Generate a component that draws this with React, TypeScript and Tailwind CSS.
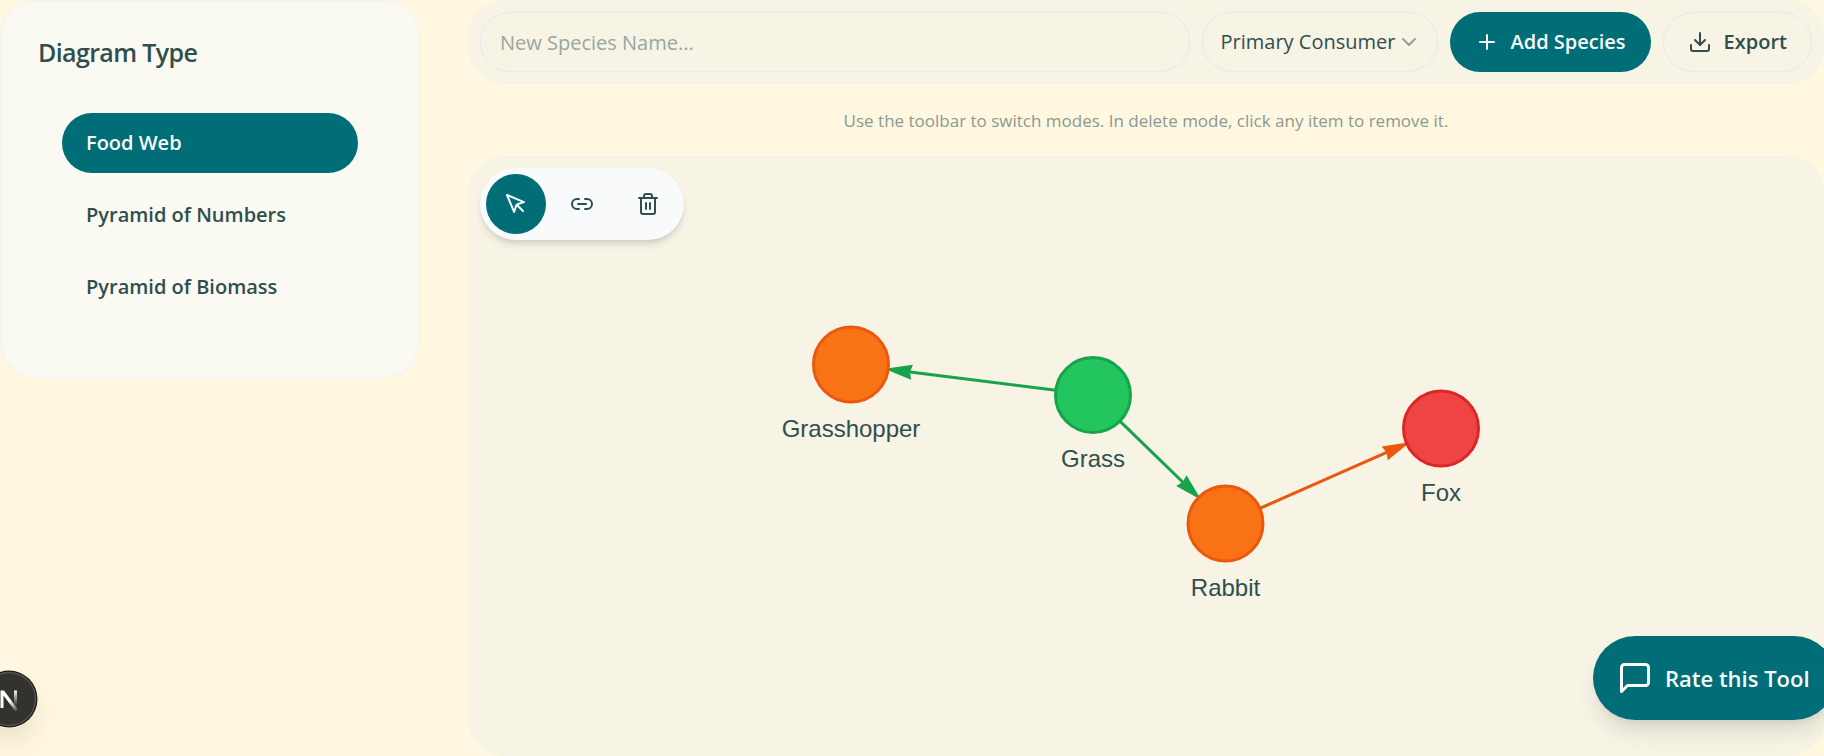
import { ChevronDown, Download, Link2, Plus } from "lucide-react";
import type { ReactNode } from "react";

const diagramTypes = ["Food Web", "Pyramid of Numbers", "Pyramid of Biomass"];

type Species = { name: string; x: number; y: number; fill: string; stroke: string };

const grasshopper: Species = { name: "Grasshopper", x: 383, y: 208.5, fill: "#f97316", stroke: "#ea580c" };
const grass: Species = { name: "Grass", x: 625, y: 239, fill: "#22c55e", stroke: "#16a34a" };
const rabbit: Species = { name: "Rabbit", x: 757.5, y: 367.5, fill: "#f97316", stroke: "#ea580c" };
const fox: Species = { name: "Fox", x: 973, y: 272.5, fill: "#ef4444", stroke: "#dc2626" };

const species = [grasshopper, grass, rabbit, fox];
const links: [Species, Species][] = [
  [grass, grasshopper],
  [grass, rabbit],
  [rabbit, fox],
];

const RADIUS = 37.5;

function Arrow({ from, to }: { from: Species; to: Species }) {
  const dx = to.x - from.x;
  const dy = to.y - from.y;
  const length = Math.hypot(dx, dy);
  const angle = (Math.atan2(dy, dx) * 180) / Math.PI;
  const tip = length - RADIUS;
  return (
    <g transform={`translate(${from.x} ${from.y}) rotate(${angle})`} fill={from.stroke} stroke="none">
      <line x1={RADIUS} y1={0} x2={tip - 20} y2={0} stroke={from.stroke} strokeWidth={3} />
      <path d={`M${tip} 1L${tip - 24} 7.5L${tip - 22} 0L${tip - 24} -7.5L${tip} -1Z`} />
    </g>
  );
}

function Stroke({ className, children }: { className: string; children: ReactNode }) {
  return (
    <svg
      viewBox="0 0 24 24"
      className={className}
      fill="none"
      stroke="currentColor"
      strokeWidth={2}
      strokeLinecap="round"
      strokeLinejoin="round"
      aria-hidden="true"
    >
      {children}
    </svg>
  );
}

export default function App() {
  return (
    <div className="relative flex min-h-screen items-start gap-12 overflow-hidden bg-[#fff7df] font-['Open_Sans','Noto_Sans',sans-serif] text-[#2f4f4f]">
      <aside className="w-[420px] shrink-0 rounded-[36px] border-2 border-[#f5f5f1] bg-[#fbfaf2] px-9 pt-8 pb-[59px]">
        <h2 className="text-[25px] leading-9 font-semibold tracking-tight">Diagram Type</h2>
        <nav className="mt-[43px] flex flex-col gap-3 px-6">
          {diagramTypes.map((type, i) => (
            <button
              key={type}
              type="button"
              className={
                i === 0
                  ? "h-15 rounded-full bg-[#006d77] px-6 text-left text-[20px] font-semibold text-[#f8fafc]"
                  : "h-15 rounded-full px-6 text-left text-[20px] font-semibold"
              }
            >
              {type}
            </button>
          ))}
        </nav>
      </aside>

      <main className="min-w-0 flex-1">
        <div className="flex gap-3 rounded-[36px] bg-[#f7f3e5] p-3">
          <input
            type="text"
            aria-label="New species name"
            placeholder="New Species Name..."
            className="h-15 min-w-0 flex-1 rounded-full border border-[#e4eaef] bg-transparent px-[19px] text-[20px] outline-none placeholder:text-[#97a7a2]"
          />
          <div className="relative w-[236px] shrink-0">
            <select
              aria-label="Trophic level"
              className="h-15 w-full appearance-none rounded-full border border-[#e4eaef] bg-transparent pr-10 pl-[18px] text-[20px] outline-none"
            >
              <option>Primary Consumer</option>
            </select>
            <ChevronDown className="pointer-events-none absolute top-[18px] right-[17px] size-6 opacity-50" />
          </div>
          <button
            type="button"
            className="flex h-15 shrink-0 items-center gap-3 rounded-full bg-[#006d77] px-[25px] text-[20px] font-semibold text-[#f8fafc]"
          >
            <Plus className="size-6" />
            Add Species
          </button>
          <button
            type="button"
            className="flex h-15 shrink-0 items-center gap-3 rounded-full border border-[#e4eaef] px-6 text-[20px] font-semibold"
          >
            <Download className="size-6" />
            Export
          </button>
        </div>

        <p className="pt-[25px] pb-[23px] text-center text-[17px] leading-6 text-[#8a9a92]">
          Use the toolbar to switch modes. In delete mode, click any item to remove it.
        </p>

        <section className="relative rounded-[36px] bg-[#f7f3e5]">
          <svg viewBox="0 0 1356 600" className="h-[600px] w-full" role="img" aria-label="Food web">
            {links.map(([from, to]) => (
              <Arrow key={from.name + to.name} from={from} to={to} />
            ))}
            {species.map((s) => (
              <g key={s.name}>
                <circle cx={s.x} cy={s.y} r={RADIUS} fill={s.fill} stroke={s.stroke} strokeWidth={3} />
                <text
                  x={s.x}
                  y={s.y + 72}
                  textAnchor="middle"
                  className="fill-[#2f4f4f] font-['Liberation_Sans',Arial,sans-serif] text-[24px]"
                >
                  {s.name}
                </text>
              </g>
            ))}
          </svg>

          <div className="absolute top-3 left-3 flex gap-1.5 rounded-full bg-[#f8fafc] p-1.5 shadow-[0_6px_9px_-2px_rgba(0,0,0,0.12),0_3px_6px_-3px_rgba(0,0,0,0.1)]">
            <button
              type="button"
              aria-label="Select"
              className="flex size-15 items-center justify-center rounded-full bg-[#006d77] text-[#f8fafc]"
            >
              <Stroke className="size-6">
                <path d="m3 3 7.07 16.97 2.51-7.39 7.39-2.51L3 3z" />
                <path d="m13 13 6 6" />
              </Stroke>
            </button>
            <button type="button" aria-label="Connect" className="flex size-15 items-center justify-center rounded-full">
              <Link2 className="size-6" />
            </button>
            <button type="button" aria-label="Delete" className="flex size-15 items-center justify-center rounded-full">
              <Stroke className="size-6">
                <path d="M3 6h18" />
                <path d="M19 6v14c0 1-1 2-2 2H7c-1 0-2-1-2-2V6" />
                <path d="M8 6V4c0-1 1-2 2-2h4c1 0 2 1 2 2v2" />
                <path d="M10 11v6M14 11v6" />
              </Stroke>
            </button>
          </div>
        </section>
      </main>

      <button
        type="button"
        className="absolute -right-3 bottom-9 flex h-21 min-w-[243px] items-center gap-3 rounded-full bg-[#006d77] px-6 text-[22px] font-semibold text-[#f8fafc] shadow-[0_15px_23px_-5px_rgba(0,0,0,0.12),0_6px_9px_-6px_rgba(0,0,0,0.1)]"
      >
        <Stroke className="size-9">
          <path d="M21 15a2 2 0 0 1-2 2H7l-4 4V5a2 2 0 0 1 2-2h14a2 2 0 0 1 2 2z" />
        </Stroke>
        Rate this Tool
      </button>

      <button
        type="button"
        aria-label="Open developer tools"
        className="absolute bottom-7 -left-5 size-[58px] rounded-full shadow-[0_16px_32px_-8px_rgba(0,0,0,0.14)]"
      >
        <svg viewBox="0 0 58 58" className="size-full" fill="none" aria-hidden="true">
          <defs>
            <linearGradient id="stem" x1="0" y1="20" x2="0" y2="36" gradientUnits="userSpaceOnUse">
              <stop stopColor="#fff" />
              <stop offset="1" stopColor="#fff" stopOpacity="0" />
            </linearGradient>
            <linearGradient id="diagonal" x1="30" y1="31" x2="38" y2="42" gradientUnits="userSpaceOnUse">
              <stop stopColor="#fff" />
              <stop offset="1" stopColor="#fff" stopOpacity="0" />
            </linearGradient>
          </defs>
          <circle cx="29" cy="29" r="28.5" fill="#1c1b18" />
          <circle cx="29" cy="29" r="26.5" fill="#33322c" stroke="#53524c" strokeWidth="1.5" />
          <path d="M34 20.5H37V36H34Z" fill="url(#stem)" />
          <path d="M20.5 38V20.5H24L38 39.5L35.5 41.5L23.5 25.5V38Z" fill="url(#diagonal)" />
        </svg>
      </button>
    </div>
  );
}
